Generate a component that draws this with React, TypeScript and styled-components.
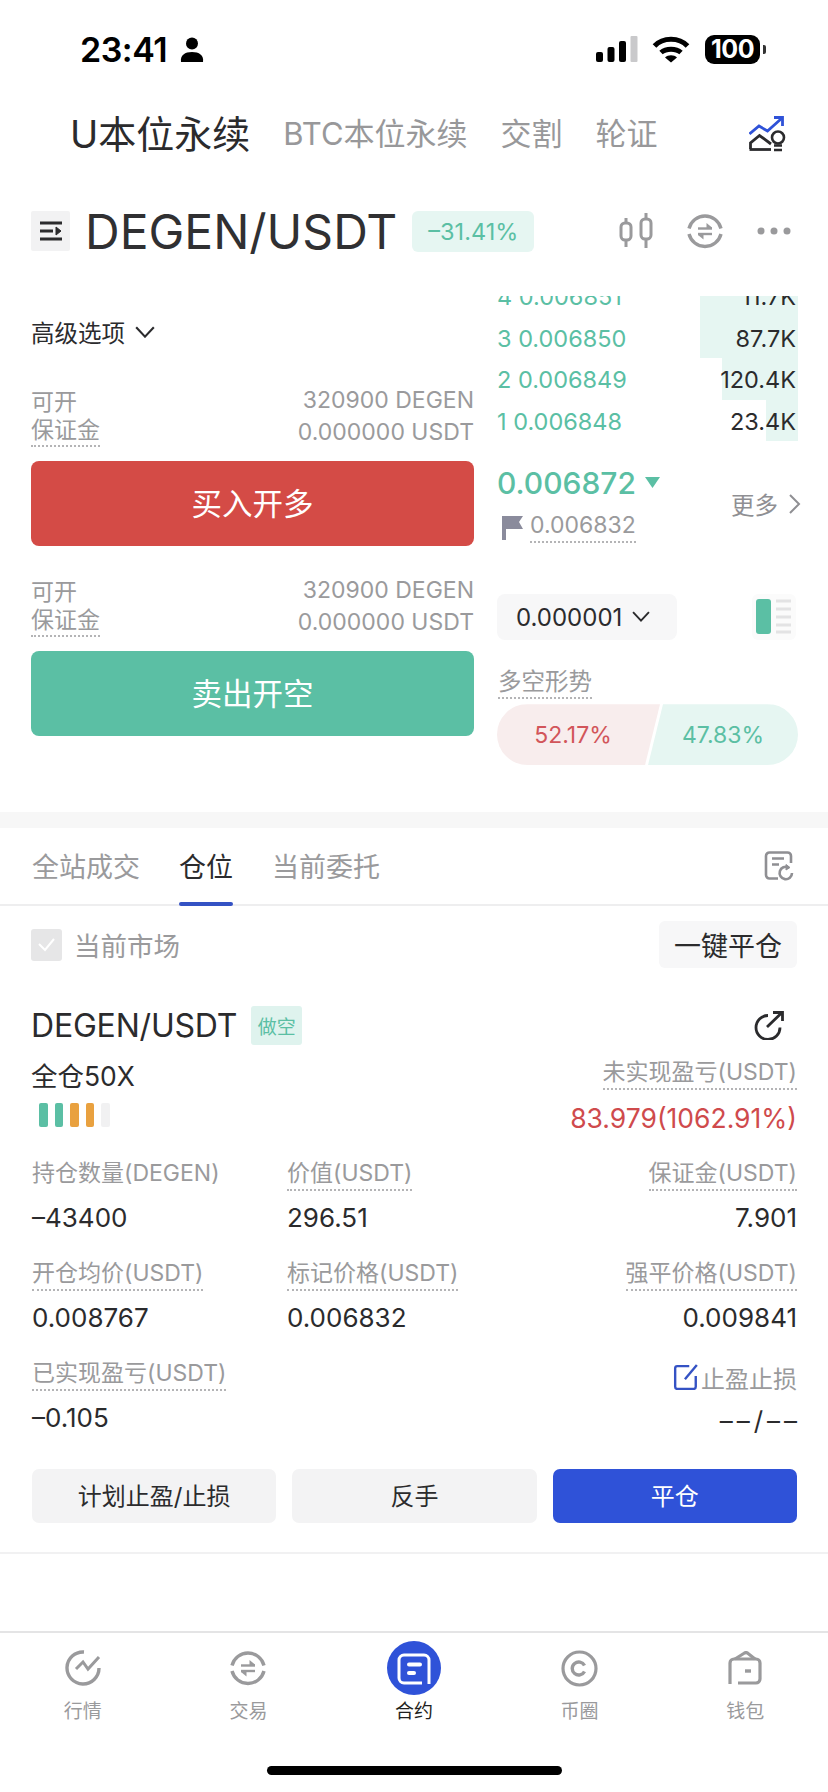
import React from 'react';
import styled, { createGlobalStyle } from 'styled-components';

const GREEN = '#5bbfa4';
const RED = '#d44b46';
const BLUE = '#2f52d8';
const DARK = '#2b2b2d';
const GREY = '#9a9a9c';

const GlobalStyle = createGlobalStyle`
  html, body {
    margin: 0;
    padding: 0;
    background: #fff;
  }
  body {
    font-family: Inter, "Noto Sans CJK SC", sans-serif;
    color: ${DARK};
  }
  * {
    box-sizing: border-box;
  }
`;

const Page = styled.div`
  width: 828px;
  height: 1792px;
  display: flex;
  flex-direction: column;
  background: #fff;
  overflow: hidden;
`;

/* status bar */
const StatusBar = styled.div`
  height: 98px;
  display: flex;
  align-items: center;
  padding: 0 68px 0 80px;
`;

const Clock = styled.span`
  font-size: 34px;
  font-weight: 600;
  color: #000;
  letter-spacing: -0.5px;
  margin-right: 13px;
`;

const StatusIcons = styled.div`
  margin-left: auto;
  display: flex;
  align-items: center;
`;

const Battery = styled.div`
  width: 55px;
  height: 29px;
  margin-left: 15px;
  border-radius: 9px;
  background: #000;
  color: #fff;
  font-size: 25px;
  font-weight: 700;
  letter-spacing: -0.5px;
  display: flex;
  align-items: center;
  justify-content: center;
  position: relative;

  &::after {
    content: '';
    position: absolute;
    right: -6px;
    top: 10px;
    width: 3px;
    height: 9px;
    border-radius: 0 2px 2px 0;
    background: #333;
  }
`;

/* market tabs */
const MarketTabs = styled.div`
  height: 72px;
  display: flex;
  align-items: center;
  padding: 0 41px 0 70px;
`;

const MarketTab = styled.span<{ $active?: boolean }>`
  font-size: ${(p) => (p.$active ? 38 : 31)}px;
  color: ${(p) => (p.$active ? DARK : '#98989a')};
  margin: 0 33px 6px 0;
  white-space: nowrap;
`;

const PushRight = styled.div`
  margin-left: auto;
  display: flex;
  align-items: center;
`;

/* pair row */
const PairRow = styled.div`
  height: 126px;
  padding: 0 37px 4px 31px;
  display: flex;
  align-items: center;
`;

const MenuBox = styled.div`
  width: 39px;
  height: 40px;
  background: #f2f2f3;
  border-radius: 2px;
  display: flex;
  align-items: center;
  justify-content: center;
  margin-right: 15px;
`;

const PairName = styled.span`
  font-size: 48px;
  color: #303032;
  white-space: nowrap;
`;

const ChangeBadge = styled.span`
  margin-left: 15px;
  width: 122px;
  height: 41px;
  border-radius: 6px;
  background: #e6f6f2;
  color: ${GREEN};
  font-size: 23.5px;
  display: flex;
  align-items: center;
  justify-content: center;
`;

const PairIcons = styled(PushRight)`
  gap: 34px;
`;

/* trade area */
const TradeArea = styled.div`
  height: 516px;
  display: flex;
  padding-left: 31px;
`;

const OrderForm = styled.div`
  width: 443px;
  display: flex;
  flex-direction: column;
`;

const Advanced = styled.div`
  height: 40px;
  margin: 16px 0 32px;
  display: flex;
  align-items: center;
  gap: 10px;
  font-size: 23.5px;
  color: ${DARK};
`;

const InfoLine = styled.div`
  height: 32px;
  display: flex;
  justify-content: space-between;
  align-items: center;
  font-size: 23px;
  color: ${GREY};
`;

const Dotted = styled.span<{ $plain?: boolean }>`
  border-bottom: 2px ${(p) => (p.$plain ? 'solid transparent' : 'dotted #b4b4b6')};
  padding-bottom: 1px;
  line-height: 1.2;
  white-space: nowrap;
`;

const TradeButton = styled.div<{ $color: string }>`
  height: 85px;
  margin: 13px 0 28px;
  padding-bottom: 4px;
  border-radius: 8px;
  background: ${(p) => p.$color};
  color: #fff;
  font-size: 30.5px;
  display: flex;
  align-items: center;
  justify-content: center;
`;

const BookColumn = styled.div`
  width: 301px;
  margin-left: 23px;
  display: flex;
  flex-direction: column;
`;

const Book = styled.div`
  height: 145px;
  overflow: hidden;
  display: flex;
  flex-direction: column;
  justify-content: flex-end;
  flex-shrink: 0;
`;

const BookRow = styled.div`
  height: 41.5px;
  flex-shrink: 0;
  position: relative;
  display: flex;
  align-items: center;
  justify-content: space-between;
  padding: 2px 2px 0 0;
  font-size: 23.5px;
`;

const Depth = styled.div`
  position: absolute;
  right: 0;
  top: 0;
  bottom: 0;
  background: #e6f6f2;
`;

const BookPrice = styled.span`
  color: ${GREEN};
  position: relative;
`;

const BookVolume = styled.span`
  color: ${DARK};
  position: relative;
`;

const PriceBlock = styled.div`
  margin-top: 24px;
  height: 80px;
  display: flex;
  align-items: center;
  justify-content: space-between;
`;

const PriceLast = styled.div`
  height: 40px;
  display: flex;
  align-items: center;
  gap: 9px;
  font-size: 30px;
  font-weight: 500;
  color: ${GREEN};
`;

const PriceMark = styled.div`
  height: 40px;
  margin-top: 5px;
  padding-left: 5px;
  display: flex;
  align-items: center;
  gap: 7px;
  font-size: 23px;
  color: ${GREY};
`;

const More = styled.div`
  margin: 0 -3px 2px 0;
  display: flex;
  align-items: center;
  gap: 10px;
  font-size: 23.5px;
  color: #8f8f93;
`;

const TickRow = styled.div`
  margin-top: 49px;
  display: flex;
  justify-content: space-between;
  padding-right: 2px;
`;

const TickSelect = styled.div`
  width: 180px;
  height: 46px;
  border-radius: 8px;
  background: #f7f7f8;
  padding-left: 19px;
  display: flex;
  align-items: center;
  gap: 10px;
  font-size: 24px;
  color: ${DARK};
`;

const LayoutToggle = styled.div`
  width: 44px;
  height: 46px;
  border-radius: 6px;
  background: #fbfbfb;
  display: flex;
  align-items: center;
  justify-content: center;
`;

const TrendLabel = styled.div`
  margin: 27px 0 8px 1px;
  font-size: 23.5px;
  color: ${GREY};
`;

const TrendBar = styled.div`
  height: 61px;
  border-radius: 31px;
  overflow: hidden;
  display: flex;
  font-size: 23px;
`;

const TrendLong = styled.div`
  width: 163px;
  padding-right: 11px;
  background: #f8eded;
  color: #d2555a;
  display: flex;
  align-items: center;
  justify-content: center;
  clip-path: polygon(0 0, 100% 0, calc(100% - 15px) 100%, 0 100%);
`;

const TrendShort = styled.div`
  flex: 1;
  margin-left: -12px;
  background: #e6f6f2;
  color: ${GREEN};
  display: flex;
  align-items: center;
  justify-content: center;
  clip-path: polygon(15px 0, 100% 0, 100% 100%, 0 100%);
`;

const Band = styled.div`
  height: 16px;
  background: #f7f7f7;
  flex-shrink: 0;
`;

/* position tabs */
const PositionTabs = styled.div`
  height: 78px;
  padding: 0 34px 0 32px;
  display: flex;
  align-items: center;
  gap: 39px;
  border-bottom: 2px solid #eeeeef;
`;

const PositionTab = styled.span<{ $active?: boolean }>`
  height: 100%;
  padding-bottom: 2px;
  display: flex;
  align-items: center;
  position: relative;
  font-size: 27px;
  color: ${(p) => (p.$active ? DARK : GREY)};

  &::after {
    content: '';
    display: ${(p) => (p.$active ? 'block' : 'none')};
    position: absolute;
    left: 0;
    right: 0;
    bottom: -2px;
    height: 4px;
    border-radius: 2px;
    background: #3452c4;
  }
`;

const FilterRow = styled.div`
  height: 47px;
  margin-top: 15px;
  padding: 0 31px;
  display: flex;
  align-items: center;
`;

const CheckBox = styled.div`
  width: 31px;
  height: 32px;
  border-radius: 3px;
  background: #e6e6e7;
  margin-right: 12px;
  display: flex;
  align-items: center;
  justify-content: center;
`;

const FilterLabel = styled.span`
  font-size: 26.5px;
  color: ${GREY};
`;

const CloseAll = styled.div`
  margin-left: auto;
  width: 138px;
  height: 47px;
  border-radius: 6px;
  background: #f7f7f8;
  font-size: 27px;
  color: ${DARK};
  display: flex;
  align-items: center;
  justify-content: center;
`;

/* position card */
const CardHead = styled.div`
  height: 39px;
  margin-top: 38px;
  padding: 0 44px 0 31px;
  display: flex;
  align-items: center;
`;

const CardPair = styled.span`
  font-size: 32px;
  color: ${DARK};
  letter-spacing: -0.2px;
`;

const SideTag = styled.span`
  margin-left: 14px;
  width: 51px;
  height: 39px;
  border-radius: 3px;
  background: #dff3ee;
  color: ${GREEN};
  font-size: 19px;
  display: flex;
  align-items: center;
  justify-content: center;
`;

const PnlRow = styled.div`
  height: 100px;
  margin-top: 11px;
  padding: 0 31px;
  display: flex;
  justify-content: space-between;
`;

const LeverColumn = styled.div`
  display: flex;
  flex-direction: column;
`;

const Lever = styled.span`
  font-size: 26.5px;
  line-height: 40px;
  color: ${DARK};
`;

const RiskBars = styled.div`
  margin: 7px 0 0 8px;
  display: flex;
  gap: 7px;
`;

const RiskBar = styled.i<{ $color: string }>`
  width: 8.5px;
  height: 24px;
  border-radius: 2px;
  background: ${(p) => p.$color};
`;

const PnlColumn = styled.div`
  display: flex;
  flex-direction: column;
  align-items: flex-end;
  margin-top: -1px;
`;

const CellLabel = styled.div<{ $right?: boolean }>`
  height: 35px;
  display: flex;
  align-items: flex-end;
  justify-content: ${(p) => (p.$right ? 'flex-end' : 'flex-start')};
  font-size: 23px;
  color: ${GREY};
`;

const PnlValue = styled.span`
  margin-top: 9px;
  font-size: 26.5px;
  line-height: 38px;
  color: #cf4a4c;
  white-space: nowrap;
`;

const Stats = styled.div`
  padding: 0 31px 0 32px;
  display: grid;
  grid-template-columns: 255px 1fr auto;
  row-gap: 20px;
`;

const Cell = styled.div<{ $right?: boolean }>`
  height: 80px;
  text-align: ${(p) => (p.$right ? 'right' : 'left')};
`;

const CellValue = styled.div`
  margin-top: 8px;
  font-size: 26px;
  line-height: 38px;
  color: ${DARK};
`;

const EmptyStop = styled(CellValue)`
  margin: 10px -4px 0 0;
  letter-spacing: 4px;
`;

const StopLabel = styled.div`
  height: 36px;
  padding-top: 6px;
  display: flex;
  align-items: center;
  justify-content: flex-end;
  gap: 2px;
  font-size: 24px;
  color: ${GREY};
`;

const ActionRow = styled.div`
  margin-top: 33px;
  padding: 0 31px 29px 32px;
  display: grid;
  grid-template-columns: repeat(3, 1fr);
  gap: 16px;
  border-bottom: 2px solid #f1f1f2;
`;

const ActionButton = styled.div<{ $primary?: boolean }>`
  height: 54px;
  padding-bottom: 4px;
  border-radius: 7px;
  background: ${(p) => (p.$primary ? BLUE : '#f3f3f4')};
  color: ${(p) => (p.$primary ? '#fff' : DARK)};
  font-size: 24px;
  display: flex;
  align-items: center;
  justify-content: center;
`;

/* bottom nav */
const Nav = styled.div`
  margin-top: auto;
  height: 161px;
  border-top: 2px solid #e4e4e5;
  display: flex;
  flex-direction: column;
  align-items: center;
`;

const NavItems = styled.div`
  width: 100%;
  padding-top: 8px;
  display: grid;
  grid-template-columns: repeat(5, 1fr);
`;

const NavItem = styled.div<{ $active?: boolean }>`
  display: flex;
  flex-direction: column;
  align-items: center;
  font-size: 19px;
  line-height: 30px;
  color: ${(p) => (p.$active ? '#1f1f21' : GREY)};
`;

const NavIcon = styled.div`
  height: 54px;
  display: flex;
  align-items: center;
  justify-content: center;
  margin-bottom: 2px;
`;

const HomeBar = styled.div`
  width: 295px;
  height: 9px;
  margin-top: 39px;
  border-radius: 5px;
  background: #000;
`;

const Person = () => (
  <svg width="24" height="25" viewBox="0 0 24 25">
    <circle cx="12" cy="6.500" r="6" fill="#000" />
    <path d="M1 25c-1-7 4-10 11-10s12 3 11 10z" fill="#000" />
  </svg>
);

const Signal = () => (
  <svg width="42" height="27" viewBox="0 0 42 27">
    <rect x="0" y="16" width="7" height="10" rx="2" fill="#000" />
    <rect x="11.500" y="11" width="7" height="15" rx="2" fill="#000" />
    <rect x="23" y="5" width="7" height="21" rx="2" fill="#000" />
    <rect x="34.500" y="0" width="7" height="26" rx="1" fill="#c9c9cb" />
  </svg>
);

const Wifi = () => (
  <svg width="38" height="27" viewBox="0 0 38 27" style={{ marginLeft: 14 }} fill="none" stroke="#000" strokeWidth="5">
    <path d="M2.500 10C11 1 27 1 35.500 10" />
    <path d="M9 16.500C14 12 24 12 29 16.500" />
    <path d="M13 21.500C16 18.500 22 18.500 25 21.500L19 26.500z" fill="#000" stroke="none" />
  </svg>
);

const TrendIdea = () => (
  <svg width="38" height="36" viewBox="0 0 38 36" fill="none">
    <path d="M0.500 18L10 10l8.500 5L32.500 2.500" stroke="#2f52d8" strokeWidth="2.800" />
    <path d="M25 1.500h8.500V10" stroke="#2f52d8" strokeWidth="2.800" />
    <path d="M1.500 33v-6l9-7.500L22 28" stroke="#2b2b2d" strokeWidth="2.800" />
    <path d="M0.500 33.500H22" stroke="#2b2b2d" strokeWidth="2.800" />
    <circle cx="29" cy="21.500" r="6" stroke="#2b2b2d" strokeWidth="2.600" />
    <path d="M25 29.500h8M25 34h8" stroke="#2b2b2d" strokeWidth="2.400" />
  </svg>
);

const MenuLines = () => (
  <svg width="24" height="22" viewBox="0 0 24 22" fill="none" stroke="#2b2b2d" strokeWidth="2.800">
    <path d="M1 3h22M1 11h13M1 19h22" />
    <path d="M17 7l5 4-5 4z" fill="#2b2b2d" strokeWidth="1" />
  </svg>
);

const Candles = () => (
  <svg width="34" height="36" viewBox="0 0 34 36" fill="none" stroke="#9a9a9c" strokeWidth="3">
    <rect x="2" y="10" width="10" height="17" rx="4" />
    <rect x="22" y="6" width="10" height="20" rx="4" />
    <path d="M7 5v5M7 27v7M27 0v6M27 26v9" />
  </svg>
);

const Exchange = () => (
  <svg width="36" height="36" viewBox="0 0 36 36" fill="none" stroke="#9a9a9c" strokeWidth="3.400">
    <path d="M2 15.500A16.500 16.500 0 0 1 34 15.500" />
    <path d="M2 21A16.500 16.500 0 0 0 34 21" />
    <path d="M11 15.500h14" strokeWidth="2.400" />
    <path d="M19.500 10l5.500 4.500v1h-5.500z" fill="#9a9a9c" stroke="none" />
    <path d="M11 21h14" strokeWidth="2.400" />
    <path d="M16.500 26.500L11 22v-1h5.500z" fill="#9a9a9c" stroke="none" />
  </svg>
);

const Dots = () => (
  <svg width="34" height="8" viewBox="0 0 34 8" fill="#9a9a9c">
    <circle cx="4" cy="4" r="3.500" />
    <circle cx="17" cy="4" r="3.500" />
    <circle cx="30" cy="4" r="3.500" />
  </svg>
);

const Chevron = ({ w = 18 }: { w?: number }) => (
  <svg width={w} height={w * 0.62} viewBox="0 0 17 10.500" fill="none" stroke={DARK} strokeWidth="1.800">
    <path d="M1 1l7.500 8L16 1" />
  </svg>
);

const Flag = () => (
  <svg width="21" height="24" viewBox="0 0 21 24" fill="#8a8b9c">
    <path d="M0 0h21l-4 6 4 7H4v11H0z" />
  </svg>
);

const Ledger = () => (
  <svg width="30" height="30" viewBox="0 0 30 30" fill="none" stroke="#8f8f93" strokeWidth="2.600">
    <path d="M27 12V5a3.500 3.500 0 0 0-3.500-3.500H5.500A3.500 3.500 0 0 0 2 5v19a3.500 3.500 0 0 0 3.500 3.500H14" />
    <path d="M8 7.500h12M8 13.500h7" />
    <path d="M28 22a6.200 6.200 0 1 1-3.500-5.600" />
    <path d="M22 13.500l4 3-4 2.500z" fill="#8f8f93" strokeWidth="1" />
  </svg>
);

const Share = () => (
  <svg width="31" height="29" viewBox="0 0 31 29" fill="none" stroke="#2b2b2d" strokeWidth="2.800">
    <path d="M15 4.500a12 12 0 1 0 12 12" />
    <path d="M14 16L29 1.500M20 1.500h9.500V10" />
  </svg>
);

const EditBox = () => (
  <svg width="26" height="26" viewBox="0 0 24 24" fill="none" stroke="#3452c4" strokeWidth="2.200">
    <path d="M15 2H4a2 2 0 0 0-2 2v17a2 2 0 0 0 2 2h15a2 2 0 0 0 2-2V11" />
    <path d="M11 14L22 1" />
  </svg>
);

const NavMarket = () => (
  <svg width="36" height="36" viewBox="0 0 36 36" fill="none" stroke="#9a9a9c" strokeWidth="3.400">
    <path d="M19 2A16 16 0 1 0 34 18" />
    <path d="M11 19l7-7 5 7L34 7" strokeWidth="3" />
  </svg>
);

const NavContract = () => (
  <svg width="54" height="54" viewBox="0 0 54 54">
    <circle cx="27" cy="27" r="27" fill="#2f52d8" />
    <path d="M42 43V19a5 5 0 0 0-5-5H17a5 5 0 0 0-5 5v18a5 5 0 0 0 5 5h18" fill="none" stroke="#fff" strokeWidth="3" />
    <rect x="20" y="21.500" width="15" height="4" rx="2" fill="#fff" />
    <rect x="20" y="30" width="9" height="4" rx="2" fill="#fff" />
  </svg>
);

const NavCircle = () => (
  <svg width="37" height="37" viewBox="0 0 37 37" fill="none" stroke="#9a9a9c">
    <circle cx="18.500" cy="18.500" r="16.500" strokeWidth="3.200" />
    <path d="M23.500 15.500a6.500 6.500 0 1 0 0 6" strokeWidth="3.400" />
  </svg>
);

const NavWallet = () => (
  <svg width="34" height="34" viewBox="0 0 34 34" fill="none" stroke="#9a9a9c" strokeWidth="3.200">
    <path d="M2 33V12a4 4 0 0 1 4-4h22a4 4 0 0 1 4 4v16a4 4 0 0 1-4 4H10" />
    <path d="M7 8l9.500-6a3 3 0 0 1 3 0L27 8" />
    <path d="M17 20h6" strokeWidth="3.400" />
  </svg>
);

const bookRows = [
  { level: 4, price: '0.006851', volume: '11.7K', depth: 98 },
  { level: 3, price: '0.006850', volume: '87.7K', depth: 98 },
  { level: 2, price: '0.006849', volume: '120.4K', depth: 76 },
  { level: 1, price: '0.006848', volume: '23.4K', depth: 32 },
];

const stats = [
  { label: '持仓数量(DEGEN)', value: '–43400', plain: true },
  { label: '价值(USDT)', value: '296.51' },
  { label: '保证金(USDT)', value: '7.901', right: true },
  { label: '开仓均价(USDT)', value: '0.008767' },
  { label: '标记价格(USDT)', value: '0.006832' },
  { label: '强平价格(USDT)', value: '0.009841', right: true },
];

const riskColors = [GREEN, GREEN, '#e9a13f', '#e9a13f', '#f1f1f2'];

const navItems = [
  { label: '行情', icon: <NavMarket /> },
  { label: '交易', icon: <Exchange /> },
  { label: '合约', icon: <NavContract />, active: true },
  { label: '币圈', icon: <NavCircle /> },
  { label: '钱包', icon: <NavWallet /> },
];

const OpenInfo = () => (
  <>
    <InfoLine>
      <span>可开</span>
      <span>320900 DEGEN</span>
    </InfoLine>
    <InfoLine>
      <Dotted>保证金</Dotted>
      <span>0.000000 USDT</span>
    </InfoLine>
  </>
);

const App: React.FC = () => {
  return (
    <Page>
      <GlobalStyle />
      <StatusBar>
        <Clock>23:41</Clock>
        <Person />
        <StatusIcons>
          <Signal />
          <Wifi />
          <Battery>100</Battery>
        </StatusIcons>
      </StatusBar>

      <MarketTabs>
        <MarketTab $active>U本位永续</MarketTab>
        <MarketTab>BTC本位永续</MarketTab>
        <MarketTab>交割</MarketTab>
        <MarketTab>轮证</MarketTab>
        <PushRight>
          <TrendIdea />
        </PushRight>
      </MarketTabs>

      <PairRow>
        <MenuBox>
          <MenuLines />
        </MenuBox>
        <PairName>DEGEN/USDT</PairName>
        <ChangeBadge>–31.41%</ChangeBadge>
        <PairIcons>
          <Candles />
          <Exchange />
          <Dots />
        </PairIcons>
      </PairRow>

      <TradeArea>
        <OrderForm>
          <Advanced>
            高级选项 <Chevron w={20} />
          </Advanced>
          <OpenInfo />
          <TradeButton $color={RED}>买入开多</TradeButton>
          <OpenInfo />
          <TradeButton $color={GREEN}>卖出开空</TradeButton>
        </OrderForm>

        <BookColumn>
          <Book>
            {bookRows.map((row) => (
              <BookRow key={row.level}>
                <Depth style={{ width: row.depth }} />
                <BookPrice>
                  {row.level} {row.price}
                </BookPrice>
                <BookVolume>{row.volume}</BookVolume>
              </BookRow>
            ))}
          </Book>

          <PriceBlock>
            <div>
              <PriceLast>
                0.006872
                <svg width="15" height="11" viewBox="0 0 15 11" fill={GREEN}>
                  <path d="M0 0h15L7.500 11z" />
                </svg>
              </PriceLast>
              <PriceMark>
                <Flag />
                <Dotted>0.006832</Dotted>
              </PriceMark>
            </div>
            <More>
              更多
              <svg width="13" height="20" viewBox="0 0 13 20" fill="none" stroke="#8f8f93" strokeWidth="2">
                <path d="M2 1l9 9-9 9" />
              </svg>
            </More>
          </PriceBlock>

          <TickRow>
            <TickSelect>
              0.000001 <Chevron />
            </TickSelect>
            <LayoutToggle>
              <svg width="36" height="36" viewBox="0 0 36 36">
                <rect x="0" y="0" width="15" height="35" rx="3" fill={GREEN} />
                <path d="M20 2h15M20 10h15M20 18h15M20 26h15M20 33h15" stroke="#e3e3e4" strokeWidth="3" />
              </svg>
            </LayoutToggle>
          </TickRow>

          <TrendLabel>
            <Dotted>多空形势</Dotted>
          </TrendLabel>
          <TrendBar>
            <TrendLong>52.17%</TrendLong>
            <TrendShort>47.83%</TrendShort>
          </TrendBar>
        </BookColumn>
      </TradeArea>

      <Band />

      <PositionTabs>
        <PositionTab>全站成交</PositionTab>
        <PositionTab $active>仓位</PositionTab>
        <PositionTab>当前委托</PositionTab>
        <PushRight>
          <Ledger />
        </PushRight>
      </PositionTabs>

      <FilterRow>
        <CheckBox>
          <svg width="17" height="14" viewBox="0 0 17 14" fill="none" stroke="#fff" strokeWidth="2">
            <path d="M1 6l6 6L16 1" />
          </svg>
        </CheckBox>
        <FilterLabel>当前市场</FilterLabel>
        <CloseAll>一键平仓</CloseAll>
      </FilterRow>

      <CardHead>
        <CardPair>DEGEN/USDT</CardPair>
        <SideTag>做空</SideTag>
        <PushRight>
          <Share />
        </PushRight>
      </CardHead>

      <PnlRow>
        <LeverColumn>
          <Lever>全仓50X</Lever>
          <RiskBars>
            {riskColors.map((color, i) => (
              <RiskBar key={i} $color={color} />
            ))}
          </RiskBars>
        </LeverColumn>
        <PnlColumn>
          <CellLabel $right>
            <Dotted>未实现盈亏(USDT)</Dotted>
          </CellLabel>
          <PnlValue>83.979(1062.91%)</PnlValue>
        </PnlColumn>
      </PnlRow>

      <Stats>
        {stats.map((s) => (
          <Cell key={s.label} $right={s.right}>
            <CellLabel $right={s.right}>
              <Dotted $plain={s.plain}>{s.label}</Dotted>
            </CellLabel>
            <CellValue>{s.value}</CellValue>
          </Cell>
        ))}
        <Cell>
          <CellLabel>
            <Dotted>已实现盈亏(USDT)</Dotted>
          </CellLabel>
          <CellValue>–0.105</CellValue>
        </Cell>
        <Cell />
        <Cell $right>
          <StopLabel>
            <EditBox />
            止盈止损
          </StopLabel>
          <EmptyStop>––/––</EmptyStop>
        </Cell>
      </Stats>

      <ActionRow>
        <ActionButton>计划止盈/止损</ActionButton>
        <ActionButton>反手</ActionButton>
        <ActionButton $primary>平仓</ActionButton>
      </ActionRow>

      <Nav>
        <NavItems>
          {navItems.map((item) => (
            <NavItem key={item.label} $active={item.active}>
              <NavIcon>{item.icon}</NavIcon>
              {item.label}
            </NavItem>
          ))}
        </NavItems>
        <HomeBar />
      </Nav>
    </Page>
  );
};

export default App;
